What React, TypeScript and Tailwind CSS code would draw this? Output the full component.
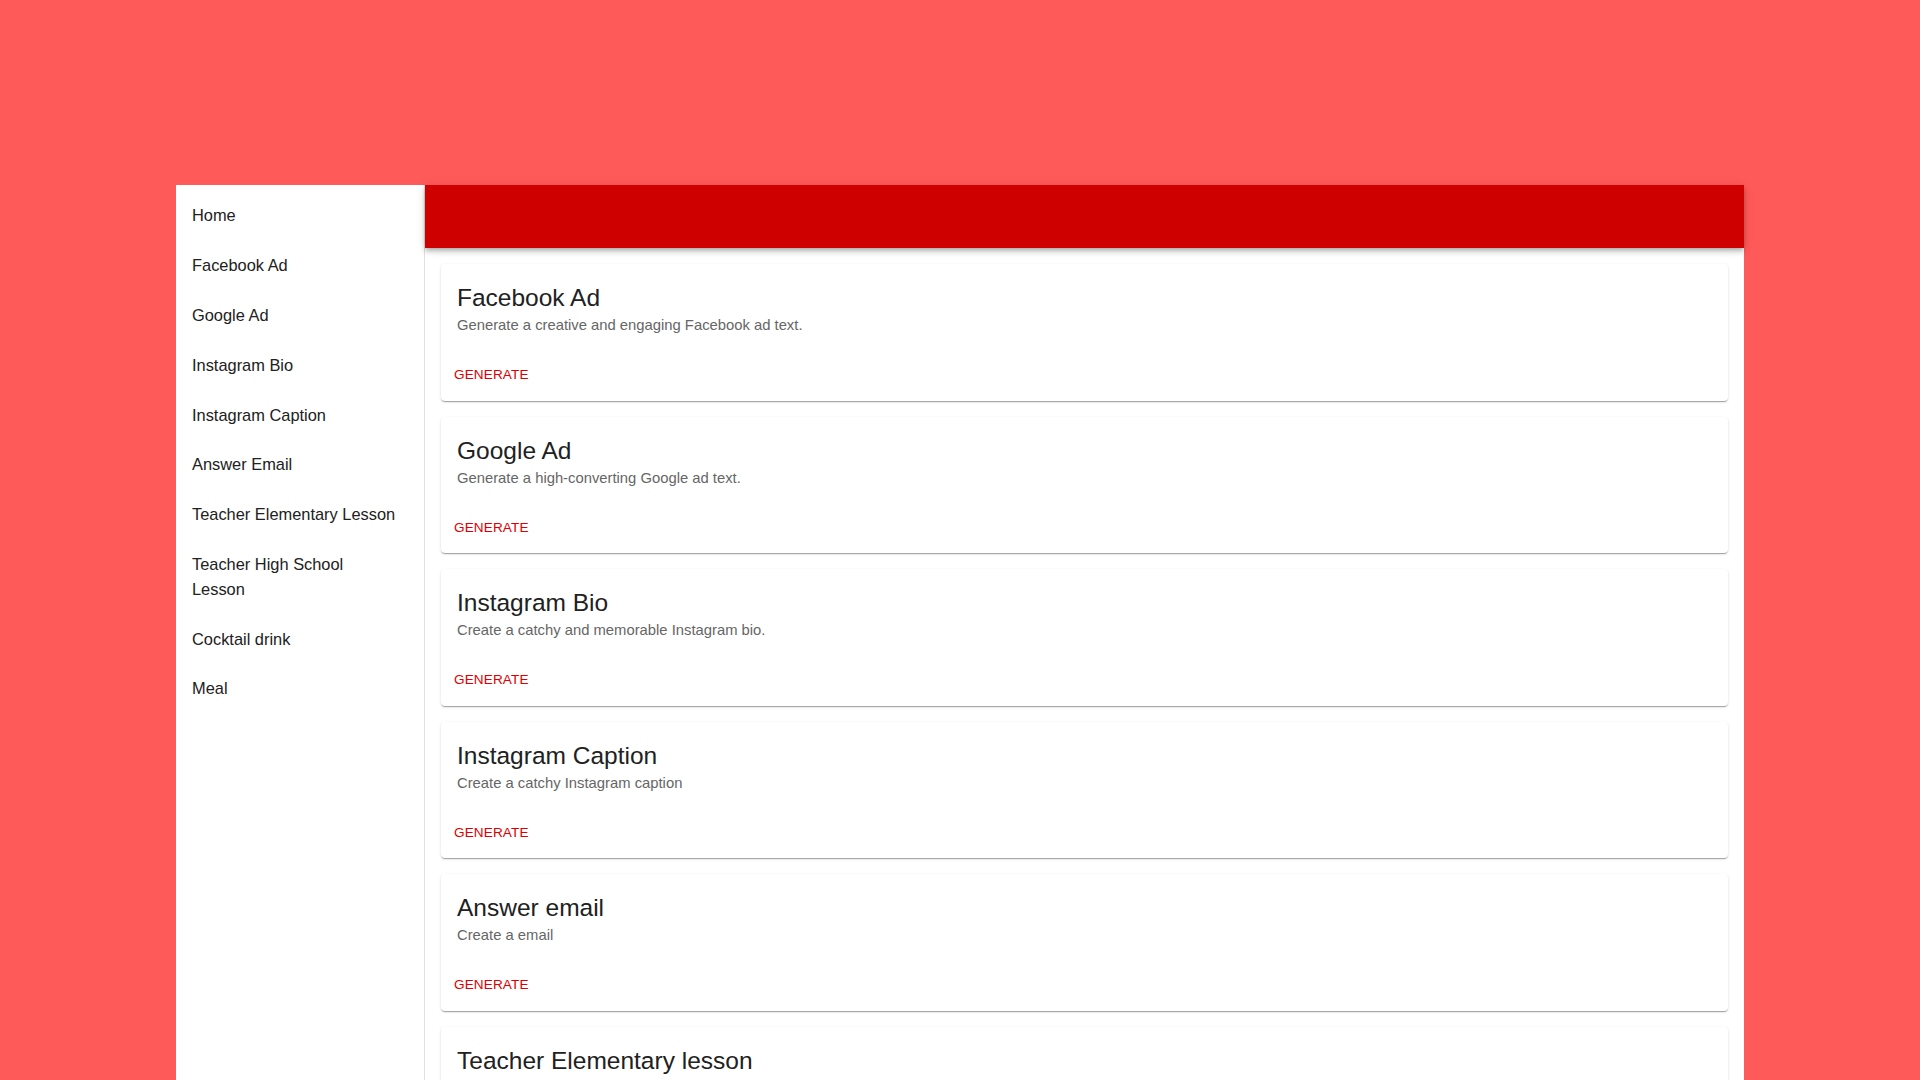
import React from "react";

const menu = [
  "Home",
  "Facebook Ad",
  "Google Ad",
  "Instagram Bio",
  "Instagram Caption",
  "Answer Email",
  "Teacher Elementary Lesson",
  "Teacher High School Lesson",
  "Cocktail drink",
  "Meal",
];

const tools = [
  { title: "Facebook Ad", text: "Generate a creative and engaging Facebook ad text." },
  { title: "Google Ad", text: "Generate a high-converting Google ad text." },
  { title: "Instagram Bio", text: "Create a catchy and memorable Instagram bio." },
  { title: "Instagram Caption", text: "Create a catchy Instagram caption" },
  { title: "Answer email", text: "Create a email" },
  { title: "Teacher Elementary lesson", text: "Create an elementary school lesson plan" },
];

function ToolCard({ title, text }: { title: string; text: string }) {
  return (
    <div className="shrink-0 bg-white rounded shadow-[0_2px_1px_-1px_rgba(0,0,0,0.2),0_1px_1px_0_rgba(0,0,0,0.14),0_1px_3px_0_rgba(0,0,0,0.12)]">
      {/* Content */}
      <div className="px-4 pt-4 pb-4">
        <div className="text-[24.5px] leading-[36px] text-[#212121]">{title}</div>
        <div className="text-[14.8px] leading-[18px] text-[#666666]">{text}</div>
      </div>

      {/* Actions */}
      <div className="p-2 flex items-center">
        <button className="h-[34.5px] px-[5px] text-[13.6px] uppercase tracking-[0.1px] text-[#dd0000] rounded">
          Generate
        </button>
      </div>
    </div>
  );
}

export default function App() {
  return (
    <div
      className="w-full h-screen overflow-hidden bg-[#ff5a5a] pt-[185px] px-[176px]"
      style={{ fontFamily: '"Liberation Sans", Arial, sans-serif' }}
    >
      <div className="flex h-full">
        {/* Sidebar */}
        <aside className="w-[249px] shrink-0 bg-white border-r border-[#e0e0e0]">
          <ul className="pt-[6px]">
            {menu.map((item) => (
              <li
                key={item}
                className="pl-4 pr-6 py-[12.4px] text-[16.4px] leading-[25px] text-[#212121]"
              >
                {item}
              </li>
            ))}
          </ul>
        </aside>

        {/* Main */}
        <main className="flex-1 min-w-0 bg-white flex flex-col">
          <header className="h-[63px] shrink-0 bg-[#cf0000] shadow-[0_2px_4px_-1px_rgba(0,0,0,0.2),0_4px_5px_0_rgba(0,0,0,0.14),0_1px_10px_0_rgba(0,0,0,0.12)] relative z-10" />
          <div className="px-4 pt-4 flex flex-col gap-4">
            {tools.map((t) => (
              <ToolCard key={t.title} title={t.title} text={t.text} />
            ))}
          </div>
        </main>
      </div>
    </div>
  );
}
